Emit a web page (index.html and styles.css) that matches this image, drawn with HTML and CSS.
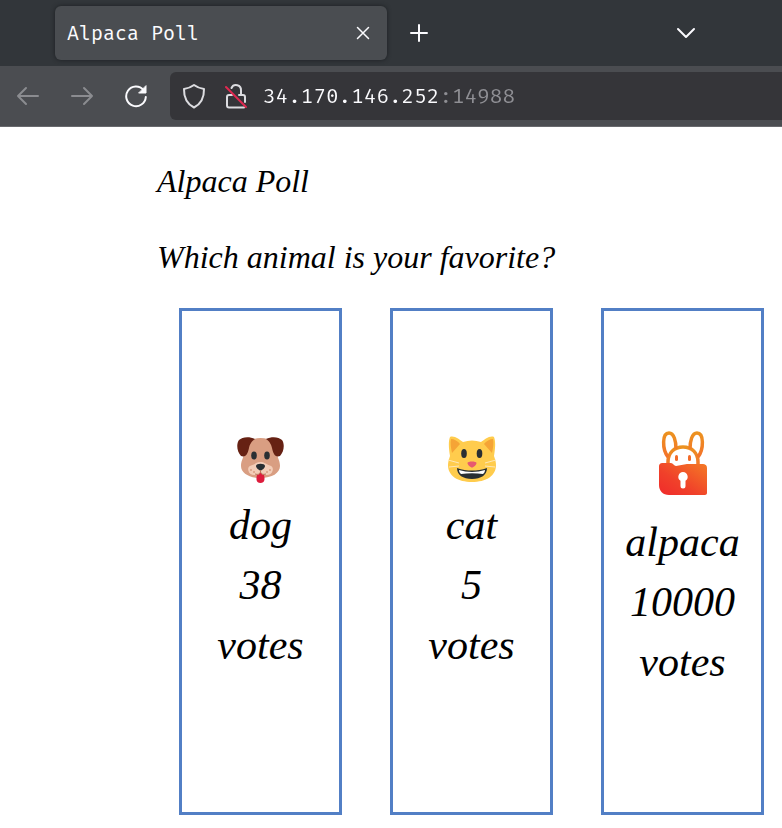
FILE: index.html
```html
<!DOCTYPE html>
<html lang="en">
<head>
<meta charset="utf-8">
<title>Alpaca Poll</title>
<link rel="stylesheet" href="styles.css">
</head>
<body>
<header class="browser">
  <div class="tabs">
    <div class="tab">
      <span class="tab-title">Alpaca Poll</span>
      <button class="icon-button" type="button" aria-label="Close tab">
        <svg class="thin" width="14" height="14" viewBox="0 0 14 14"><path d="M1.500 1.500l11 11M12.500 1.500l-11 11"/></svg>
      </button>
    </div>
    <button class="icon-button new-tab" type="button" aria-label="New tab">
      <svg width="20" height="20" viewBox="0 0 20 20"><path d="M10 2v16M2 10h16"/></svg>
    </button>
    <button class="icon-button all-tabs" type="button" aria-label="List all tabs">
      <svg width="20" height="12" viewBox="0 0 20 12"><path d="M2 2l8 8 8-8"/></svg>
    </button>
  </div>
  <div class="toolbar">
    <nav class="nav">
      <button class="icon-button" type="button" aria-label="Back" disabled>
        <svg width="24" height="24" viewBox="0 0 24 24"><path d="M22 12H2M10 4L2 12l8 8"/></svg>
      </button>
      <button class="icon-button" type="button" aria-label="Forward" disabled>
        <svg width="24" height="24" viewBox="0 0 24 24"><path d="M2 12H22M14 4l8 8-8 8"/></svg>
      </button>
      <button class="icon-button" type="button" aria-label="Reload">
        <svg width="24" height="24" viewBox="0 0 24 24"><path d="M19.500 6A9.800 9.800 0 1 0 21.800 13"/><path class="solid" d="M22 2v7h-7z"/></svg>
      </button>
    </nav>
    <div class="address">
      <svg width="24" height="26" viewBox="0 0 24 26"><path d="M12 2C9 4.300 5.500 5.500 2 5.900C1.800 14 4.500 20.500 12 24.500C19.500 20.500 22.200 14 22 5.900C18.500 5.500 15 4.300 12 2z"/></svg>
      <svg width="24" height="26" viewBox="0 0 24 26"><path d="M7.500 5a5 5 0 0 1 9.500 2.500V12M8 12H5a2 2 0 0 0-2 2v8.500a2 2 0 0 0 2 2h15M15 12h4a2 2 0 0 1 2 2v5"/><path class="slash" d="M2 4l20 20"/></svg>
      <input class="url" type="text" aria-label="Address" value="34.170.146.252:14988" spellcheck="false">
    </div>
  </div>
</header>
<main class="page">
  <h1 class="heading">Alpaca Poll</h1>
  <p class="heading">Which animal is your favorite?</p>
  <div class="cards">
    <button class="card" type="button">
      <svg class="emoji" width="48" height="48" viewBox="0 0 48 48" aria-hidden="true">
        <path fill="#d99e82" d="M23.500 2C13 2 8 8 7 18c-1 5-3 7-3 12 0 7 8 12 19.500 12S43 37 43 30c0-5-2-7-3-12C39 8 34 2 23.500 2z"/>
        <path fill="#662113" d="M18 3C12 0 5 1 2 4c-3 4-2 12 2 16 5 2 7-3 8-8 1-4 2-6 6-9zM29 3c6-3 13-2 16 1 3 4 2 12-2 16-5 2-7-3-8-8-1-4-2-6-6-9z"/>
        <ellipse cx="17" cy="19.500" rx="2.800" ry="4" fill="#292f33"/>
        <ellipse cx="30" cy="19.500" rx="2.800" ry="4" fill="#292f33"/>
        <path fill="#f3cdb8" d="M23.500 26c-4 0-5 2-8 3-4 1-5 3-4 6 1 5 8 5 12 2 4 3 11 3 12-2 1-3 0-5-4-6-3-1-4-3-8-3z"/>
        <path fill="#dd1c3c" d="M20 39c2 0 2.500-1 3.500-3 1 2 1.500 3 3.500 3 1 4 1 8-3.500 8S19 43 20 39z"/>
        <path fill="#292f33" d="M19 30c0-3 9-3 9 0 0 2-3 4.500-4.500 4.500S19 32 19 30z"/>
        <path fill="none" stroke="#b97459" stroke-width="1" d="M23.500 34v2M18 38c3 1 5 0 5.500-2 .5 2 2.500 3 5.500 2"/>
        <g fill="#d99e82"><circle cx="14" cy="34" r="1"/><circle cx="17" cy="36" r="1"/><circle cx="33" cy="34" r="1"/><circle cx="30" cy="36" r="1"/></g>
      </svg>
      <span>dog</span><span>38</span><span>votes</span>
    </button>
    <button class="card" type="button">
      <svg class="emoji" width="48" height="48" viewBox="0 0 48 48" aria-hidden="true">
        <path fill="#ffcc4d" d="M2 1c4-2 10 3 13 5 6-2 12-2 18 0 3-2 9-7 13-5 2 5 1 13 0 19 1 3 2 6 2 9 0 11-10 17-24 17S0 40 0 29c0-3 1-6 2-9C1 14 0 6 2 1z"/>
        <path fill="#f5a436" d="M3 3c3 0 7 2 9 5l-8 9C3 12 2 7 3 3zM45 3c-3 0-7 2-9 5l8 9c1-5 2-10 1-14z"/>
        <ellipse cx="16" cy="17.500" rx="2.800" ry="4.500" fill="#292f33"/>
        <ellipse cx="31.500" cy="17.500" rx="2.800" ry="4.500" fill="#292f33"/>
        <path fill="none" stroke="#fee7b8" stroke-width="1" d="M0 24l11 3M1 31l10-1M48 24l-11 3M47 31l-10-1"/>
        <path fill="#e75a70" d="M19.500 27c0-2 9-2 9 0s-3 4.500-4.500 4.500-4.500-2.500-4.500-4.500z"/>
        <path fill="#292f33" d="M9 32c5 2 10 2.500 15 2.500s10-.5 15-2.500c0 7-6 11-15 11S9 39 9 32z"/>
        <path fill="#fff" d="M11 34c8 2.500 18 2.500 26 0 0 2-1 3-2 4-7-1-15-1-22 0-1-1-2-2-2-4z"/>
      </svg>
      <span>cat</span><span>5</span><span>votes</span>
    </button>
    <button class="card" type="button">
      <svg class="logo" width="48" height="64" viewBox="0 0 48 64" aria-hidden="true">
        <defs>
          <linearGradient id="ears" x1="0" y1="0" x2="0" y2="1"><stop offset="0" stop-color="#ec9220"/><stop offset="1" stop-color="#f4722a"/></linearGradient>
          <linearGradient id="lock" x1="0" y1="1" x2="1" y2="0"><stop offset="0" stop-color="#f02a2b"/><stop offset=".4" stop-color="#f0412a"/><stop offset="1" stop-color="#f47b25"/></linearGradient>
        </defs>
        <g fill="none" stroke="url(#ears)" stroke-width="3.500" stroke-linejoin="round">
          <path d="M9 37V31c0-9 6-15 15-15s15 6 15 15v6"/>
          <path d="M9 26C3 18 3 2 10 2c5 0 7 8 7 16M39 26c6-8 6-24-1-24-5 0-7 8-7 16"/>
        </g>
        <path fill="url(#lock)" d="M4 32h8c2 0 3 3 5 3l11-2h16c2 0 4 1 4 4v25c0 1-1 2-2 2H10C4 64 0 60 0 54V36c0-3 1-4 4-4z"/>
        <rect x="16" y="24" width="3" height="6" rx="1.500" fill="#f36b29"/>
        <rect x="29" y="24" width="3" height="6" rx="1.500" fill="#f36b29"/>
        <path fill="#fff" d="M24 41a4.800 4.800 0 0 0-2.500 8.800V55a2.500 2.500 0 0 0 5 0v-5.200A4.800 4.800 0 0 0 24 41z"/>
      </svg>
      <span>alpaca</span><span>10000</span><span>votes</span>
    </button>
  </div>
</main>
</body>
</html>
```
FILE: styles.css
```css
* {
  box-sizing: border-box;
}

body {
  margin: 0;
  background: #fff;
  color: #000;
  font-family: "Z003", "URW Chancery L", "Apple Chancery", "Liberation Serif", serif;
  font-style: italic;
}

button,
input {
  margin: 0;
  padding: 0;
  border: 0;
  background: none;
  color: inherit;
  font: inherit;
}

.browser {
  color: #fbfbfe;
  font-family: "Fira Mono", "DejaVu Sans Mono", monospace;
  font-style: normal;
  border-bottom: 1px solid #68696d;
}

.browser svg {
  display: block;
  fill: none;
  stroke: currentColor;
  stroke-width: 2;
  stroke-linecap: round;
  stroke-linejoin: round;
}

.browser .thin {
  stroke-width: 1.5;
}

.browser .solid {
  fill: currentColor;
  stroke-width: 1;
}

.browser .slash {
  stroke: #e22850;
}

.tabs {
  display: flex;
  align-items: center;
  height: 66px;
  padding: 0 86px 0 55px;
  background: #32363a;
}

.tab {
  display: flex;
  align-items: center;
  justify-content: space-between;
  flex: 0 1 332px;
  height: 54px;
  padding: 0 17px 0 12px;
  border-radius: 6px;
  background: #4a4d51;
  box-shadow: 0 0 4px #1c1f22;
  font-size: 20px;
}

.new-tab {
  margin-left: 22px;
}

.all-tabs {
  margin-left: auto;
}

.icon-button:disabled {
  color: #8b8c90;
}

.toolbar {
  display: flex;
  align-items: center;
  height: 60px;
  background: #4b4d51;
}

.nav {
  display: flex;
  gap: 30px;
  padding: 0 22px 0 16px;
}

.address {
  display: flex;
  flex: 1;
  align-items: center;
  gap: 18px;
  height: 48px;
  padding-left: 12px;
  border-radius: 6px 0 0 6px;
  background: #353539;
}

.address svg {
  color: #dcdce0;
}

.address .url {
  flex: 1;
  min-width: 0;
  margin-left: -3px;
  font-size: 21px;
  line-height: 32px;
  color: transparent;
  background: linear-gradient(90deg, #fbfbfe 14ch, #8f8f94 14ch);
  background-clip: text;
  -webkit-background-clip: text;
}

.page {
  padding: 34px 18px 13px 157px;
}

.heading {
  margin: 0 0 36px;
  font-size: 32px;
  line-height: 40px;
  font-weight: 400;
}

.cards {
  display: grid;
  grid-template-columns: repeat(3, 1fr);
  gap: 48px;
  margin: -5px 0 0 22px;
}

.card {
  display: flex;
  flex-direction: column;
  align-items: center;
  min-height: 507px;
  padding-top: 120px;
  border: 3px solid #527fc5;
  font-size: 42px;
  line-height: 60px;
}

.emoji {
  margin: 5px 0 11px;
}

.logo {
  margin-bottom: 17px;
}
```
